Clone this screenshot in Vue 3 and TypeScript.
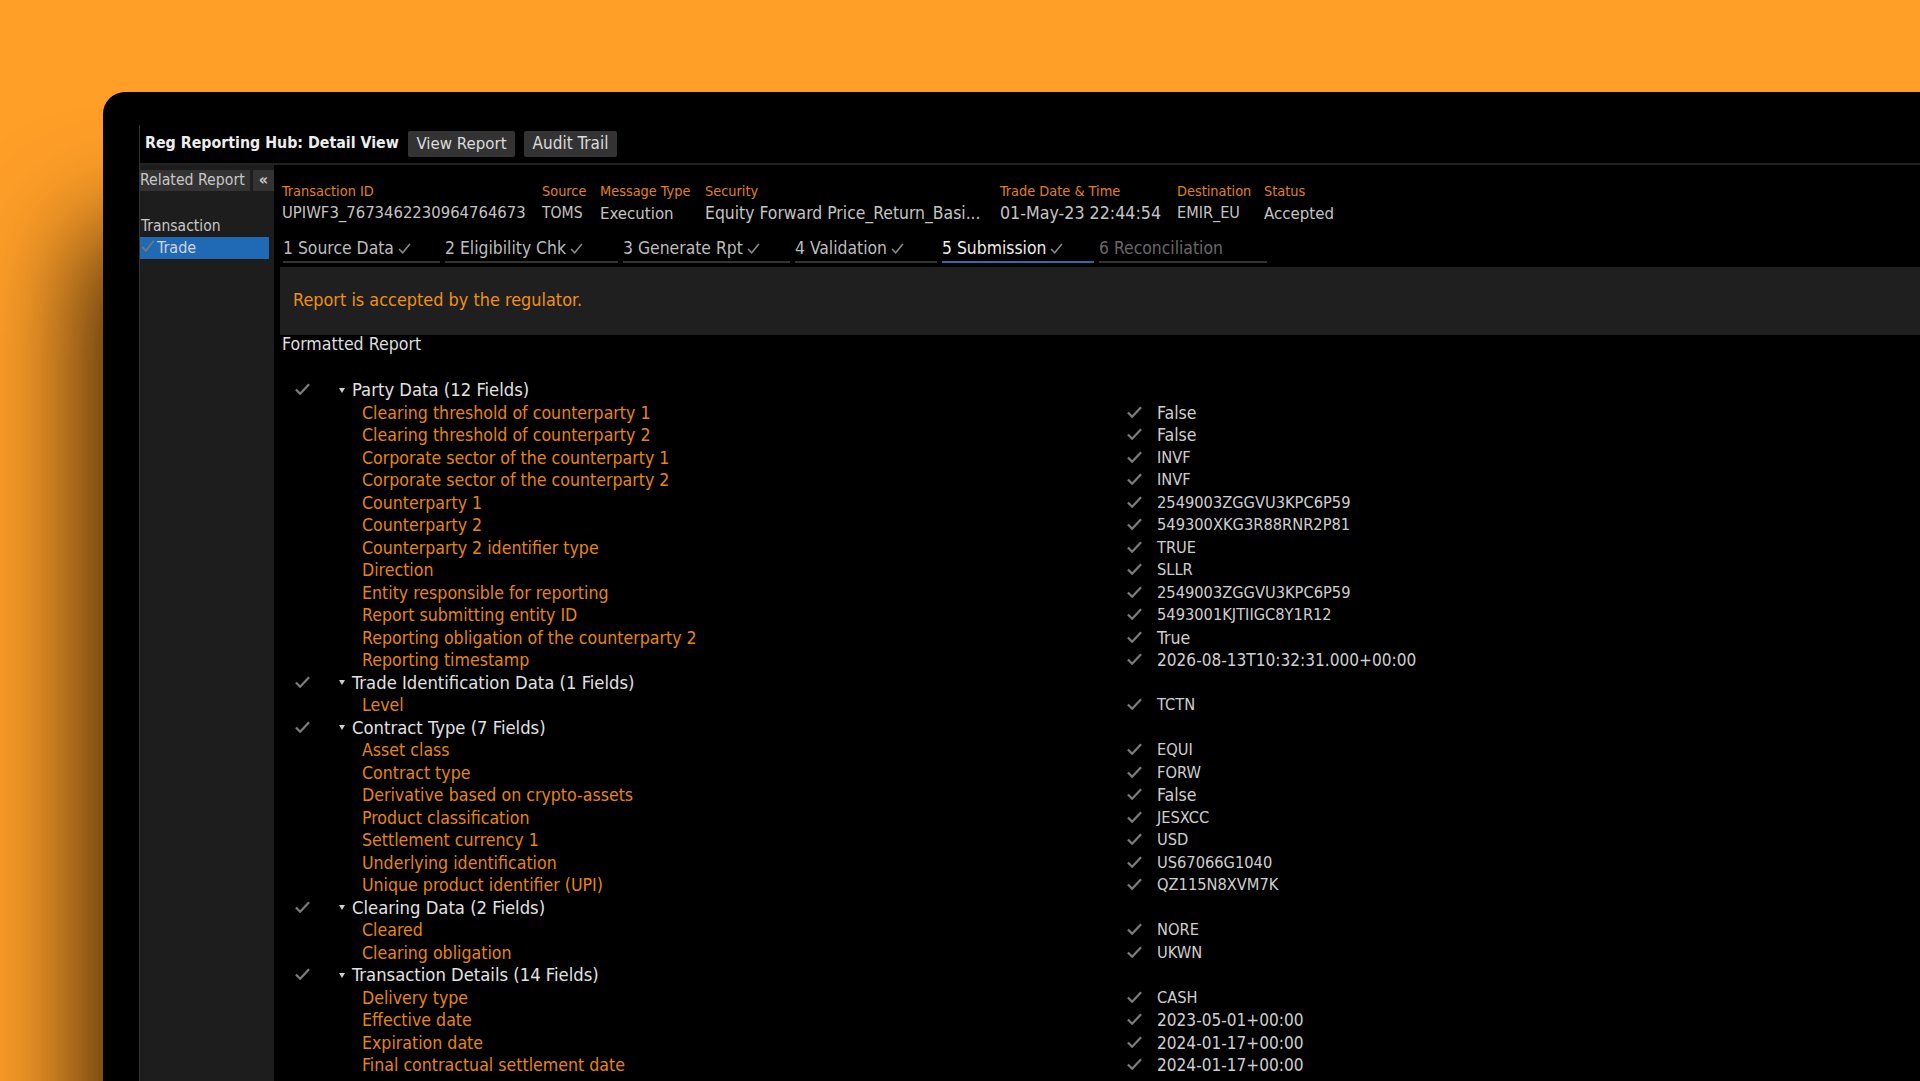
<script setup lang="ts">
interface Row { kind: 'section' | 'field'; label: string; value?: string }

const columns = [
  { label: 'Transaction ID', value: 'UPIWF3_7673462230964764673', width: 260, size: 16.5 },
  { label: 'Source', value: 'TOMS', width: 58, size: 15.6 },
  { label: 'Message Type', value: 'Execution', width: 105, size: 16.7 },
  { label: 'Security', value: 'Equity Forward Price_Return_Basi...', width: 295, size: 17.4 },
  { label: 'Trade Date & Time', value: '01-May-23 22:44:54', width: 177, size: 17.7 },
  { label: 'Destination', value: 'EMIR_EU', width: 87, size: 16.1 },
  { label: 'Status', value: 'Accepted', width: 100, size: 16.7 }
]

const tabs = [
  { label: '1 Source Data', width: 157, done: true },
  { label: '2 Eligibility Chk', width: 173, done: true },
  { label: '3 Generate Rpt', width: 167, done: true },
  { label: '4 Validation', width: 142, done: true },
  { label: '5 Submission', width: 152, done: true, active: true },
  { label: '6 Reconciliation', width: 168, done: false }
]

const rows: Row[] = [
  { kind: 'section', label: 'Party Data (12 Fields)' },
  { kind: 'field', label: 'Clearing threshold of counterparty 1', value: 'False' },
  { kind: 'field', label: 'Clearing threshold of counterparty 2', value: 'False' },
  { kind: 'field', label: 'Corporate sector of the counterparty 1', value: 'INVF' },
  { kind: 'field', label: 'Corporate sector of the counterparty 2', value: 'INVF' },
  { kind: 'field', label: 'Counterparty 1', value: '2549003ZGGVU3KPC6P59' },
  { kind: 'field', label: 'Counterparty 2', value: '549300XKG3R88RNR2P81' },
  { kind: 'field', label: 'Counterparty 2 identifier type', value: 'TRUE' },
  { kind: 'field', label: 'Direction', value: 'SLLR' },
  { kind: 'field', label: 'Entity responsible for reporting', value: '2549003ZGGVU3KPC6P59' },
  { kind: 'field', label: 'Report submitting entity ID', value: '5493001KJTIIGC8Y1R12' },
  { kind: 'field', label: 'Reporting obligation of the counterparty 2', value: 'True' },
  { kind: 'field', label: 'Reporting timestamp', value: '2026-08-13T10:32:31.000+00:00' },
  { kind: 'section', label: 'Trade Identification Data (1 Fields)' },
  { kind: 'field', label: 'Level', value: 'TCTN' },
  { kind: 'section', label: 'Contract Type (7 Fields)' },
  { kind: 'field', label: 'Asset class', value: 'EQUI' },
  { kind: 'field', label: 'Contract type', value: 'FORW' },
  { kind: 'field', label: 'Derivative based on crypto-assets', value: 'False' },
  { kind: 'field', label: 'Product classification', value: 'JESXCC' },
  { kind: 'field', label: 'Settlement currency 1', value: 'USD' },
  { kind: 'field', label: 'Underlying identification', value: 'US67066G1040' },
  { kind: 'field', label: 'Unique product identifier (UPI)', value: 'QZ115N8XVM7K' },
  { kind: 'section', label: 'Clearing Data (2 Fields)' },
  { kind: 'field', label: 'Cleared', value: 'NORE' },
  { kind: 'field', label: 'Clearing obligation', value: 'UKWN' },
  { kind: 'section', label: 'Transaction Details (14 Fields)' },
  { kind: 'field', label: 'Delivery type', value: 'CASH' },
  { kind: 'field', label: 'Effective date', value: '2023-05-01+00:00' },
  { kind: 'field', label: 'Expiration date', value: '2024-01-17+00:00' },
  { kind: 'field', label: 'Final contractual settlement date', value: '2024-01-17+00:00' }
]

const valueClass = (s = ''): string => {
  if (s.includes('+')) return 'date'
  return /[a-z]/.test(s) ? 'word' : 'code'
}
</script>

<template>
  <div class="stage">
    <div class="window">
      <div class="app">
        <header class="titlebar">
          <span class="title">Reg Reporting Hub: Detail View</span>
          <button class="btn view">View Report</button>
          <button class="btn audit">Audit Trail</button>
        </header>
        <div class="body">
          <aside class="sidebar">
            <div class="related">
              <span class="related-btn">Related Report</span>
              <span class="collapse">«</span>
            </div>
            <div class="tree-head">Transaction</div>
            <div class="tree-item">
              <svg class="item-check" viewBox="0 0 16 16"><path d="M1.5 9 L5.5 13.5 L14.5 2" /></svg>
              <span>Trade</span>
            </div>
          </aside>
          <main class="content">
            <div class="meta">
              <div v-for="c in columns" :key="c.label" class="meta-col" :style="{ width: c.width + 'px' }">
                <div class="meta-label">{{ c.label }}</div>
                <div class="meta-value" :style="{ fontSize: c.size + 'px' }">{{ c.value }}</div>
              </div>
            </div>
            <nav class="tabs">
              <div
                v-for="t in tabs"
                :key="t.label"
                class="tab"
                :class="{ active: t.active, pending: !t.done }"
                :style="{ width: t.width + 'px' }"
              >
                <span>{{ t.label }}</span>
                <svg v-if="t.done" class="tab-check" viewBox="0 0 12 12"><path d="M1 6.5 L4.3 10 L11 1.8" /></svg>
              </div>
            </nav>
            <div class="notice">Report is accepted by the regulator.</div>
            <div class="report-title">Formatted Report</div>
            <div class="report">
              <div v-for="r in rows" :key="r.label" class="row" :class="r.kind">
                <template v-if="r.kind === 'section'">
                  <svg class="check sec-check" viewBox="0 0 16 12"><path d="M1 6.5 L5.5 11 L15 1" /></svg>
                  <span class="caret"></span>
                  <span class="sec-label">{{ r.label }}</span>
                </template>
                <template v-else>
                  <span class="field-label">{{ r.label }}</span>
                  <svg class="check" viewBox="0 0 16 12"><path d="M1 6.5 L5.5 11 L15 1" /></svg>
                  <span class="field-value" :class="valueClass(r.value)">{{ r.value }}</span>
                </template>
              </div>
            </div>
          </main>
        </div>
      </div>
    </div>
  </div>
</template>

<style>
html, body { margin: 0; background: #ff9f28; overflow: hidden; }
</style>

<style scoped>
.stage {
  height: 100vh;
  box-sizing: border-box;
  padding: 92px 0 0 103px;
  overflow: hidden;
  background: #ff9f28;
  font-family: "DejaVu Sans Condensed", "DejaVu Sans", sans-serif;
  font-stretch: condensed;
  font-size: 17.6px;
  line-height: 22.5px;
}
.window {
  height: 1100px;
  background: #000;
  border-radius: 22px 0 0 0;
  padding: 33px 0 0 36px;
  box-shadow: -20px 140px 110px rgba(0, 0, 0, 0.78);
}
.app {
  border-left: 1px solid #333;
  height: 100%;
}
.titlebar {
  display: flex;
  align-items: center;
  height: 37px;
  padding: 0 0 1px 5px;
  border-bottom: 2px solid #222;
  color: #e8e8e8;
}
.title { font-weight: 700; font-size: 15.8px; width: 263px; color: #eee; white-space: nowrap; }
.btn {
  font: inherit;
  font-stretch: condensed;
  height: 26px;
  padding: 0;
  border: 0;
  border-radius: 2px;
  background: #333;
  color: #dcdcdc;
  text-align: center;
}
.btn.view { width: 107px; margin-right: 9px; font-size: 16.7px; }
.btn.audit { width: 93px; font-size: 17px; }
.body { display: flex; height: 100%; }
.sidebar {
  width: 134px;
  flex: none;
  padding-top: 5px;
  background: #1d1d1d;
  color: #c8c8c8;
}
.related { display: flex; gap: 3px; height: 21px; }
.related-btn {
  width: 110px;
  background: #333;
  font-size: 15.7px;
  line-height: 20px;
  color: #c8c8c8;
  white-space: nowrap;
}
.collapse {
  width: 21px;
  background: #333;
  text-align: center;
  line-height: 19px;
  font-size: 16px;
  font-weight: 700;
  color: #ccc;
}
.tree-head {
  margin-top: 24px;
  padding-left: 1px;
  font-size: 15.5px;
  height: 22px;
  line-height: 22px;
}
.tree-item {
  position: relative;
  width: 129px;
  height: 22px;
  padding-left: 17px;
  box-sizing: border-box;
  background: #1f69b5;
  font-size: 16px;
  line-height: 22px;
  color: #d4d4d4;
}
.item-check {
  position: absolute;
  left: 1px;
  top: 2px;
  width: 14px;
  height: 14px;
  fill: none;
  stroke: #777;
  stroke-width: 2;
}
.content { flex: 1; padding: 17px 0 0 6px; min-width: 0; }
.meta { display: flex; padding-left: 2px; }
.meta-col { flex: none; white-space: nowrap; }
.meta-label {
  color: #e0821a;
  font-size: 14.4px;
  line-height: 19px;
}
.meta-value { color: #c4c4c4; line-height: 24px; }
.tabs { display: flex; gap: 5px; margin-top: 10px; padding-left: 3px; }
.tab {
  flex: none;
  box-sizing: border-box;
  height: 28px;
  border-bottom: 2px solid #333;
  color: #bdbdbd;
  display: flex;
  align-items: center;
  gap: 4px;
  white-space: nowrap;
  font-size: 17.4px;
  line-height: 24px;
}
.tab.active { border-bottom-color: #2d6cac; color: #ededed; }
.tab.pending { color: #696969; }
.tab-check {
  width: 13px;
  height: 13px;
  fill: none;
  stroke: #8a8a8a;
  stroke-width: 1.4;
}
.notice {
  margin-top: 4px;
  height: 68px;
  line-height: 66px;
  padding-left: 13px;
  font-size: 17.9px;
  background: #1f1f1f;
  color: #ee9119;
}
.report-title {
  padding-left: 2px;
  height: 21px;
  line-height: 19px;
  color: #dedede;
}
.report { margin-top: 23px; }
.row {
  position: relative;
  display: flex;
  align-items: center;
  height: 22.5px;
  white-space: nowrap;
}
.sec-check { margin-left: 15px; }
.check {
  flex: none;
  width: 15px;
  height: 12px;
  margin-bottom: 2px;
  fill: none;
  stroke: #7c7c7c;
  stroke-width: 2.4;
}
.caret {
  width: 0;
  height: 0;
  margin-left: 29px;
  border-left: 3.5px solid transparent;
  border-right: 3.5px solid transparent;
  border-top: 5px solid #cfcfcf;
}
.sec-label { margin-left: 7px; font-size: 18.3px; color: #e2e2e2; }
.field-label { width: 765px; margin-left: 82px; flex: none; color: #e58612; }
.field-value { margin-left: 15px; color: #cfcfcf; }
.field-value.word { font-size: 17.6px; }
.field-value.code { font-size: 16.3px; }
.field-value.date { font-size: 17.1px; }
</style>
